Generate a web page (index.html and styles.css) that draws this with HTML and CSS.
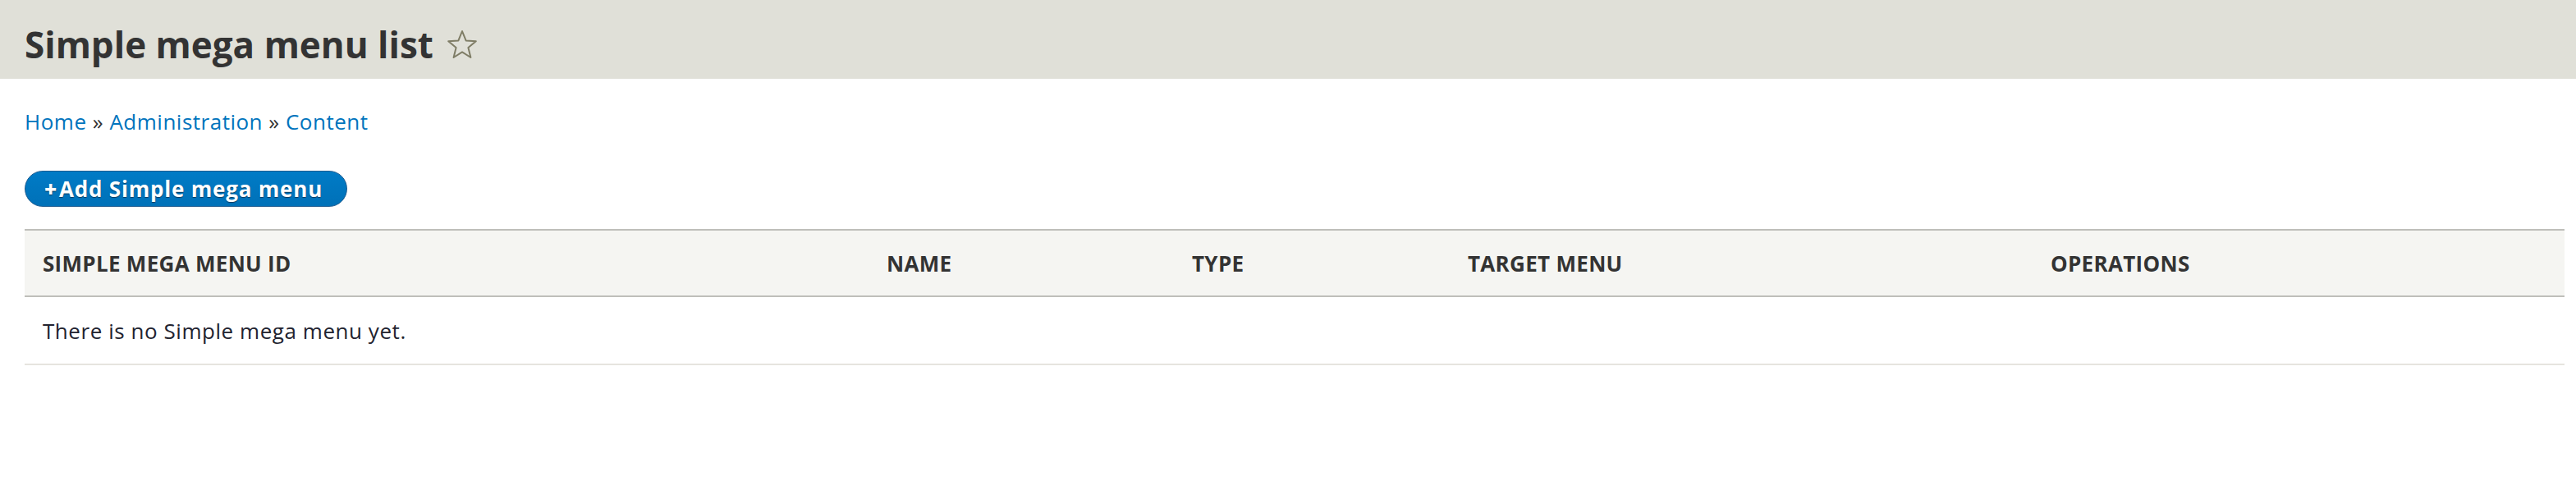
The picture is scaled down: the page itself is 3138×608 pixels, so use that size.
FILE: index.html
```html
<!DOCTYPE html>
<html lang="en">
<head>
    <meta charset="UTF-8">
    <meta name="viewport" content="width=device-width, initial-scale=1.0">
    <title>Simple mega menu list</title>
    <link rel="stylesheet" href="styles.css">
</head>
<body>
    <header class="page-header">
        <h1 class="page-title">
            Simple mega menu list
            <a href="#" class="shortcut" title="Add to Default shortcuts">
                <svg width="38" height="37" viewBox="0 0 38 37">
                    <polygon points="19,2 23.6,13.4 35.8,14.2 26.4,22 29.4,34 19,27.4 8.6,34 11.6,22 2.2,14.2 14.4,13.4"
                             fill="none" stroke="#7f7d66" stroke-width="2" stroke-linejoin="round"/>
                </svg>
            </a>
        </h1>
    </header>

    <main class="layout-container">
        <nav class="breadcrumb">
            <a href="#">Home</a> <span class="sep">&raquo;</span>
            <a href="#">Administration</a> <span class="sep">&raquo;</span>
            <a href="#">Content</a>
        </nav>

        <div class="action-links">
            <a href="#" class="button-action"><span class="plus">+</span>Add Simple mega menu</a>
        </div>

        <table class="listing">
            <colgroup>
                <col class="col-id">
                <col class="col-name">
                <col class="col-type">
                <col class="col-target">
                <col class="col-ops">
            </colgroup>
            <thead>
                <tr>
                    <th>Simple mega menu ID</th>
                    <th>Name</th>
                    <th>Type</th>
                    <th>Target menu</th>
                    <th>Operations</th>
                </tr>
            </thead>
            <tbody>
                <tr>
                    <td colspan="5">There is no Simple mega menu yet.</td>
                </tr>
            </tbody>
        </table>
    </main>
</body>
</html>
```

FILE: styles.css
```css
body {
    font-family: 'Open Sans', 'Noto Sans', 'DejaVu Sans', sans-serif;
    margin: 0;
    padding: 0;
    background-color: #fff;
    color: #222330;
}
a {
    color: #0074bd;
    text-decoration: none;
}
.page-header {
    background-color: #e0e0d8;
    height: 96px;
    box-sizing: border-box;
    padding: 32px 30px 0;
}
.page-title {
    margin: 0;
    display: flex;
    align-items: center;
    font-size: 44px;
    line-height: 45px;
    font-weight: bold;
    color: #333;
}
.shortcut {
    display: flex;
    margin-left: 16px;
}
.layout-container {
    padding: 0 14px 0 30px;
}
.breadcrumb {
    padding-top: 34px;
    font-size: 26px;
    line-height: 36px;
    letter-spacing: 0.5px;
}
.breadcrumb .sep {
    color: #333;
}
.action-links {
    margin-top: 42px;
    display: flex;
}
.button-action {
    display: inline-block;
    padding: 6px 29px 6px 23px;
    border: 1px solid #1e5c90;
    border-radius: 23px;
    background: linear-gradient(to bottom, #007bc6, #0071b8);
    color: #fff;
    font-size: 26px;
    line-height: 30px;
    font-weight: bold;
    letter-spacing: 0.8px;
    text-shadow: 0 1px 1px rgba(0, 0, 0, 0.5);
}
.button-action .plus {
    font-weight: 800;
    padding-right: 2px;
}
.listing {
    margin-top: 27px;
    width: 100%;
    border-collapse: collapse;
    table-layout: fixed;
}
.col-id { width: 1028px; }
.col-name { width: 372px; }
.col-type { width: 336px; }
.col-target { width: 710px; }
.listing th {
    background-color: #f5f5f2;
    border-top: 2px solid #bfbfba;
    border-bottom: 2px solid #bfbfba;
    height: 79px;
    padding: 0 22px;
    text-align: left;
    text-transform: uppercase;
    font-size: 26px;
    font-weight: bold;
    letter-spacing: 0.3px;
    color: #333;
}
.listing td {
    height: 81px;
    padding: 0 22px;
    border-bottom: 2px solid #e6e4df;
    font-size: 26px;
    letter-spacing: 0.55px;
}
```
